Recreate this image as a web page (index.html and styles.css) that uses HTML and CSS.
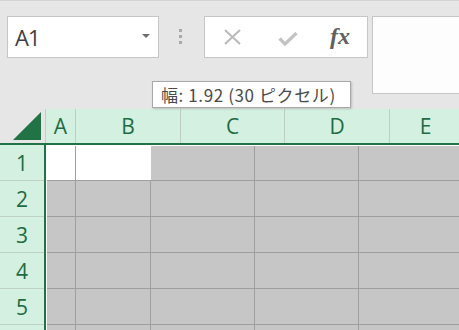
FILE: index.html
```html
<!DOCTYPE html>
<html>
<head>
  <title>Excel</title>
  <link rel="stylesheet" href="styles.css">
</head>
<body>
  <div class="ribbon">
    <div class="namebox">
      <span class="cellref">A1</span>
      <span class="dropdown"></span>
    </div>
    <div class="grip">
      <span></span><span></span><span></span>
    </div>
    <div class="buttons">
      <svg class="btn-x" width="20" height="16" viewBox="0 0 20 16">
        <path d="M2 1 L17 15 M17 1 L2 15" stroke="#b9b9b9" stroke-width="2" fill="none"/>
      </svg>
      <svg class="btn-ok" width="20" height="14" viewBox="0 0 20 14">
        <path d="M1.5 6.5 L7 12 L18.5 1" stroke="#c2c2c2" stroke-width="3.2" fill="none"/>
      </svg>
      <span class="fx">fx</span>
    </div>
    <div class="formula"></div>
  </div>

  <div class="header">
    <div class="corner">
      <svg width="29" height="28" viewBox="0 0 29 28">
        <path d="M0 28 L28 0 L28 28 Z" fill="#217346"/>
      </svg>
    </div>
    <div class="colhead" style="width: 29px">A</div>
    <div class="colhead" style="width: 104px">B</div>
    <div class="colhead" style="width: 103px">C</div>
    <div class="colhead" style="width: 104px">D</div>
    <div class="colhead" style="width: 71px">E</div>
  </div>

  <div class="body">
    <div class="rowheads">
      <div class="rowhead first">1</div>
      <div class="rowhead">2</div>
      <div class="rowhead">3</div>
      <div class="rowhead">4</div>
      <div class="rowhead">5</div>
      <div class="rowhead"></div>
    </div>
    <div class="sheet">
      <div class="row first">
        <div class="cell white" style="width: 28px"></div>
        <div class="cell white" style="width: 74px"></div>
        <div class="cell" style="width: 103px"></div>
        <div class="cell" style="width: 103px"></div>
        <div class="cell" style="width: 100px"></div>
      </div>
      <div class="row">
        <div class="cell" style="width: 28px"></div>
        <div class="cell" style="width: 74px"></div>
        <div class="cell" style="width: 103px"></div>
        <div class="cell" style="width: 103px"></div>
        <div class="cell" style="width: 100px"></div>
      </div>
      <div class="row">
        <div class="cell" style="width: 28px"></div>
        <div class="cell" style="width: 74px"></div>
        <div class="cell" style="width: 103px"></div>
        <div class="cell" style="width: 103px"></div>
        <div class="cell" style="width: 100px"></div>
      </div>
      <div class="row">
        <div class="cell" style="width: 28px"></div>
        <div class="cell" style="width: 74px"></div>
        <div class="cell" style="width: 103px"></div>
        <div class="cell" style="width: 103px"></div>
        <div class="cell" style="width: 100px"></div>
      </div>
      <div class="row">
        <div class="cell" style="width: 28px"></div>
        <div class="cell" style="width: 74px"></div>
        <div class="cell" style="width: 103px"></div>
        <div class="cell" style="width: 103px"></div>
        <div class="cell" style="width: 100px"></div>
      </div>
      <div class="row">
        <div class="cell" style="width: 28px"></div>
        <div class="cell" style="width: 74px"></div>
        <div class="cell" style="width: 103px"></div>
        <div class="cell" style="width: 103px"></div>
        <div class="cell" style="width: 100px"></div>
      </div>
    </div>
  </div>

  <div class="tooltip">幅: 1.92 (30 ピクセル)</div>
</body>
</html>
```

FILE: styles.css
```css
body {
  margin: 0;
  width: 459px;
  height: 329px;
  overflow: hidden;
  position: relative;
  background: #e6e6e6;
  border-top: 1px solid #d4d4d4;
  font-family: "Open Sans", "Noto Sans", sans-serif;
}

.ribbon {
  display: flex;
  align-items: flex-start;
  height: 93px;
  padding: 15px 0 0 7px;
}

.ribbon > * {
  flex-shrink: 0;
}

.namebox {
  box-sizing: border-box;
  width: 152px;
  height: 42px;
  border: 1px solid #c6c6c6;
  background: #fff;
  display: flex;
  align-items: center;
  justify-content: space-between;
  padding: 0 8px 0 7px;
}

.cellref {
  font-size: 22px;
  color: #404040;
  letter-spacing: -1px;
}

.dropdown {
  width: 0;
  height: 0;
  border-left: 4px solid transparent;
  border-right: 4px solid transparent;
  border-top: 4px solid #6e6e6e;
  margin-bottom: 3px;
}

.grip {
  display: flex;
  flex-direction: column;
  gap: 3px;
  margin: 13px 0 0 20px;
}

.grip span {
  width: 3px;
  height: 3px;
  background: #a9a9a9;
}

.buttons {
  box-sizing: border-box;
  width: 164px;
  height: 42px;
  margin-left: 22px;
  border: 1px solid #c6c6c6;
  background: #fff;
  display: flex;
  align-items: center;
  padding-left: 18px;
}

.btn-ok {
  margin-left: 35px;
  margin-top: 3px;
}

.fx {
  margin-left: 32px;
  font-family: "Liberation Serif", serif;
  font-style: italic;
  font-weight: bold;
  font-size: 24px;
  color: #606060;
  margin-top: -2px;
}

.formula {
  box-sizing: border-box;
  width: 100px;
  height: 78px;
  margin-left: 4px;
  border: 1px solid #c6c6c6;
  border-right: none;
  background: #fdfdfd;
}

.header {
  display: flex;
  height: 34px;
  border-bottom: 2px solid #217346;
}

.corner {
  width: 45px;
  flex-shrink: 0;
  display: flex;
  align-items: flex-end;
  justify-content: flex-end;
  padding: 0 3px 3px 0;
  box-sizing: border-box;
}

.colhead {
  flex-shrink: 0;
  background: #d3f0e0;
  border-left: 1px solid #bfcfc6;
  color: #1f6b42;
  font-size: 21px;
  display: flex;
  align-items: center;
  justify-content: center;
}

.body {
  display: flex;
}

.rowheads {
  width: 44px;
  flex-shrink: 0;
  background: #d3f0e0;
  border-right: 2px solid #217346;
}

.rowhead {
  height: 35px;
  border-bottom: 1px solid #bfcfc6;
  color: #1f6b42;
  font-size: 21px;
  display: flex;
  align-items: center;
  justify-content: center;
}

.sheet {
  flex: 1;
  border-top: 1px solid #fff;
  border-left: 1px solid #fff;
}

.row {
  display: flex;
  height: 35px;
  border-bottom: 1px solid #9f9f9f;
}

.row.first {
  height: 34px;
}

.cell {
  flex-shrink: 0;
  background: #c6c6c6;
  border-right: 1px solid #9f9f9f;
}

.cell.white {
  background: #fff;
}

.row.first .cell.white + .cell.white {
  border-right-color: #fff;
}

.tooltip {
  position: absolute;
  left: 152px;
  top: 80px;
  box-sizing: border-box;
  width: 199px;
  height: 27px;
  border: 1px solid #a8a8a8;
  background: #fff;
  box-shadow: 1px 1px 2px rgba(0, 0, 0, 0.18);
  padding-left: 8px;
  font-family: "Noto Sans CJK JP", sans-serif;
  font-size: 17px;
  letter-spacing: 0.6px;
  line-height: 25px;
  color: #4a4a4a;
}
```
